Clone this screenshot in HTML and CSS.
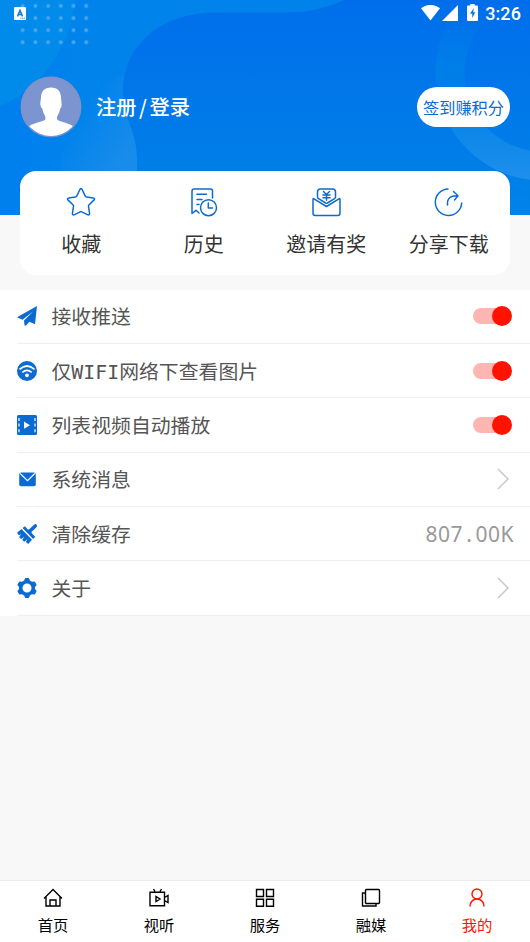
FILE: index.html
```html
<!DOCTYPE html>
<html lang="zh-CN">
<head>
<meta charset="utf-8">
<title>我的</title>
<link rel="stylesheet" href="styles.css">
</head>
<body>
<div class="app">
  <header class="hero">
    <svg class="hero-bg" viewBox="0 0 530 215" aria-hidden="true">
      <defs>
        <linearGradient id="base" x1="0" y1="0" x2="1" y2="0"><stop offset="0" stop-color="#007eee"/><stop offset=".14" stop-color="#0083eb"/><stop offset="1" stop-color="#0082ea"/></linearGradient>
        <linearGradient id="blob" x1="0" y1="0" x2="0" y2="1"><stop offset="0" stop-color="#006eeb"/><stop offset="1" stop-color="#0083e7"/></linearGradient>
        <linearGradient id="glow" gradientUnits="userSpaceOnUse" x1="72" y1="120" x2="130" y2="158"><stop offset="0" stop-color="#198ceb" stop-opacity="0"/><stop offset="1" stop-color="#198ceb"/></linearGradient>
        <linearGradient id="ring" gradientUnits="userSpaceOnUse" x1="0" y1="20" x2="0" y2="180"><stop offset="0" stop-color="#0092e8" stop-opacity="0"/><stop offset=".4" stop-color="#0082e8" stop-opacity=".7"/><stop offset="1" stop-color="#1e90eb"/></linearGradient>
        <pattern id="dots" x="16.4" y="0" width="12.7" height="12.1" patternUnits="userSpaceOnUse"><circle cx="6.3" cy="6" r="2" fill="#49a5ef"/></pattern>
      </defs>
      <rect width="530" height="215" fill="url(#base)"/>
      <path d="M0 0H75C70 45 47 83 0 107Z" fill="#008aea"/>
      <path d="M140 70C90 78 55 120 58 215H150V70Z" fill="url(#glow)"/>
      <path d="M285 12.5H215C164 12.5 123 43 123 92C123 120 137 129 137 160V215H530V0H344C328 8 308 12.5 285 12.5Z" fill="url(#blob)"/>
      <circle cx="543" cy="73" r="93" fill="none" stroke="url(#ring)" stroke-width="29"/>
      <rect x="16.4" y="0" width="76.2" height="48.4" fill="url(#dots)"/>
    </svg>
    <div class="status">
      <svg class="ime" viewBox="0 0 12 13"><rect width="12" height="13" rx="1" fill="#fff"/><path d="M3.5 9.4 6 3.4l2.5 6M4.3 7.6h3.4" fill="none" stroke="#087cdc" stroke-width="1.5"/><path d="M6.5 11.2h4.2" stroke="#087cdc" stroke-dasharray="1 .7"/></svg>
      <div class="signals">
        <svg class="wifi" viewBox="0 0 19 16"><path d="M0 3.2C5.5-1.1 13.5-1.1 19 3.2L9.5 15.5Z" fill="#fff"/></svg>
        <svg class="cell" viewBox="0 0 16 16"><path d="M0 16 16 0V16Z" fill="#fff"/></svg>
        <svg class="battery" viewBox="0 0 11 17"><path d="M3.3 0h4.4v1.6H10q1 0 1 1V16q0 1-1 1H1q-1 0-1-1V2.600q0-1 1-1h2.300Z" fill="#fff"/><path d="M6.700 4 3 9.800h2.200V14L8.400 8.200H6.300Z" fill="#087cdc"/></svg>
        <span class="clock">3:26</span>
      </div>
    </div>
    <div class="profile">
      <svg class="avatar" viewBox="0 0 62 62"><defs><clipPath id="face"><circle cx="31" cy="31" r="29"/></clipPath></defs><circle cx="31" cy="31" r="29.700" fill="#7c94cf" stroke="#7f91c8" stroke-width="1.500"/><g clip-path="url(#face)"><path d="M31 11.500C24.500 11.500 21 15.500 21 21.500L20.300 27Q20 31 22.500 33C23 38 25.500 39 25.500 42.500C25.500 46 15 46 9 50V62H53V50C47 46 37 46 37 42.500C37 39 39.500 38 40 33Q42.300 31 41.500 27L41 21.500C41 15.500 37.500 11.500 31 11.500Z" fill="#fff"/></g></svg>
      <a class="login">注册<span class="slash">/</span>登录</a>
      <button class="checkin">签到赚积分</button>
    </div>
  </header>

  <section class="shortcuts">
    <a class="shortcut"><svg viewBox="0 0 30 30"><path d="M13.900 2.500q1.100-1.800 2.200 0l3.300 6.800q.3.700 1.100.8l7 1q1.700.5.600 1.800L22.900 18q-.5.600-.4 1.300l1.100 7.300q-.1 1.700-1.700 1.200l-6.100-3q-.8-.4-1.600 0l-6.100 3q-1.600.5-1.700-1.200l1.100-7.300q.1-.7-.4-1.300L1.900 12.900q-1.100-1.300.6-1.800l7-1q.8-.1 1.100-.8Z"/></svg><span>收藏</span></a>
    <a class="shortcut"><svg viewBox="0 0 30 30"><path d="M24.500 11V4q0-2-2-2H6Q4 2 4 4v22.500l4-3.200 3 2.700M9 7.200h9.500M9 12.500h5M9 17.500h2M20.300 16v5h4.200"/><circle cx="20.500" cy="20.700" r="8"/></svg><span>历史</span></a>
    <a class="shortcut"><svg viewBox="0 0 30 30"><path d="M6.500 9.500V5q0-3 3-3h12q3 0 3 3v5q0 1-1 1.700L16.400 16q-.9.600-1.800 0l-7-4.300q-1.100-.7-1.100-2.200M3 11.800q-1-.6-1 .7v13.700q0 2.200 2.200 2.200h22.600q2.200 0 2.200-2.200V12.500q0-1.300-1-.7l-12.500 7.700Z"/><path d="m12.500 4.500 3 3 3-3M12 8h7M12 10.700h7M15.500 7.500v5.700"/></svg><span>邀请有奖</span></a>
    <a class="shortcut"><svg viewBox="0 0 30 30"><path d="M15 2A13.200 13.200 0 1 0 28.700 16M14.500 18C14 11.500 17 8.800 24.500 8.800M20.500 4.500 25 8.800l-3.500 4.200"/></svg><span>分享下载</span></a>
  </section>

  <main class="settings">
    <div class="row"><svg class="icon" viewBox="0 0 20 20"><path d="M20 0 18 18.300 12.300 15.700 9 19.500H7.500L7 14.600 16.300 5.300 5.500 13.700 0 11.300Z"/></svg><span class="label">接收推送</span><i class="switch"></i></div>
    <div class="row"><svg class="icon" viewBox="0 0 20 20"><circle cx="10" cy="10" r="10"/><path d="M2.500 8.300Q10 1.700 17.500 8.300M5.300 11.400Q10 7.200 14.700 11.400" fill="none" stroke="#fff" stroke-width="1.700"/><circle cx="10" cy="14.300" r="1.900" fill="#fff"/></svg><span class="label">仅<span class="mono">WIFI</span>网络下查看图片</span><i class="switch"></i></div>
    <div class="row"><svg class="icon" viewBox="0 0 20 20"><rect width="20" height="20" rx="1.500"/><path d="M2 3v15M18 3v15" stroke="#fff" stroke-width="1.200" stroke-dasharray="3 2.600"/><path d="m7 6.500 6 3.700-6 3.500Z" fill="#fff"/></svg><span class="label">列表视频自动播放</span><i class="switch"></i></div>
    <div class="row"><svg class="icon" viewBox="0 0 20 20"><rect x="2.200" y="3.500" width="16.600" height="13.700" rx="2"/><path d="m3.200 4.500 7.300 7.200 7.300-7.200" fill="none" stroke="#fff" stroke-width="1.200"/></svg><span class="label">系统消息</span><svg class="arrow" viewBox="0 0 12 22"><path d="m1 1 10 10L1 21"/></svg></div>
    <div class="row"><svg class="icon" viewBox="0 0 20 20"><path d="M5.500 4 8 2.300 10.500 5.300Q12 6 13 4.500L17 .7q1.500-1.200 2.600 0 1 1.200-.2 2.600L15 7.500q-1.100 1.200.2 2.300l3 2.900L16.200 15Z"/><path d="M4.500 5 15 15.700 11.200 20 8.800 18 10.500 15.200 7.300 17.700 5.200 16 7.200 13 4 15 2.100 13 4.100 10.500 1.500 11 0 8.800Z"/></svg><span class="label">清除缓存</span><span class="size">807<span class="point">.</span>00K</span></div>
    <div class="row"><svg class="icon" viewBox="0 0 20 20"><path fill-rule="evenodd" d="M8.700 0h2.600q.7 0 .9.700l.6 1.800 2.200 1.300 2-.4q.7-.1 1 .5l1.400 2.400q.3.700-.2 1.200L18 9v2l1.200 1.500q.5.500.2 1.200L18 16.100q-.3.600-1 .5l-2-.4-2.200 1.300-.6 1.800q-.2.700-.9.700H8.700q-.7 0-.9-.7l-.6-1.800L5 16.200l-2 .4q-.7.100-1-.5L.6 13.700q-.3-.7.2-1.200L2 11V9L.8 7.500Q.3 7 .6 6.300L2 3.900q.3-.6 1-.5l2 .4 2.200-1.300.6-1.800Q8 0 8.700 0ZM10 5.500a4.500 4.500 0 1 0 0 9 4.500 4.500 0 0 0 0-9Z"/></svg><span class="label">关于</span><svg class="arrow" viewBox="0 0 12 22"><path d="m1 1 10 10L1 21"/></svg></div>
  </main>

  <nav class="tabs">
    <a class="tab"><svg viewBox="0 0 20 20"><path d="M1 10.500 10 1.500l9 9M3 9v9h14V9M7 18v-6h6v6"/></svg><span>首页</span></a>
    <a class="tab"><svg viewBox="0 0 20 20"><path d="M1 4.200h14.500v13.500H1ZM4.500 1 6 3.500M12.500 1 11 3.500M7 8.500v5l4-2.500ZM15.500 9.500 19 7.500v7l-3.500-2"/></svg><span>视听</span></a>
    <a class="tab"><svg viewBox="0 0 20 20"><path d="M1.500 1.500h7v7h-7ZM11.500 1.500h7v7h-7ZM1.500 11.200h7v7h-7ZM11.500 11.200h7v7h-7Z"/></svg><span>服务</span></a>
    <a class="tab"><svg viewBox="0 0 20 20"><rect x="4.500" y="1.500" width="14" height="14" rx="1"/><path d="M4 5H1.500v13H15v-2.500"/></svg><span>融媒</span></a>
    <a class="tab active"><svg viewBox="0 0 20 20"><circle cx="10" cy="6" r="5"/><path d="M3 18.500C3 8.500 17 8.500 17 18.500"/></svg><span>我的</span></a>
  </nav>
</div>
</body>
</html>
```
FILE: styles.css
```css
* { box-sizing: border-box; }

body {
  margin: 0;
  font-family: "Noto Sans CJK SC", sans-serif;
  background: #f8f8f8;
}

.app {
  display: flex;
  flex-direction: column;
  height: 942px;
}

.hero {
  position: relative;
  flex: none;
  height: 215px;
  color: #fff;
}

.hero-bg {
  position: absolute;
  inset: 0;
  width: 100%;
  height: 100%;
}

.status {
  position: relative;
  display: flex;
  justify-content: space-between;
  height: 27px;
  padding: 4px 9px 0 14px;
}

.ime { width: 12px; height: 13px; margin-top: 3px; }
.signals { display: flex; align-items: flex-start; }
.wifi { width: 19px; height: 16px; margin: 1px 2px 0 0; }
.cell { width: 16px; height: 16px; margin: 1px 9px 0 0; }
.battery { width: 11px; height: 17px; margin-right: 7.500px; }

.clock {
  font: 500 18px/20px Roboto, sans-serif;
  letter-spacing: .1px;
}

.profile {
  position: relative;
  display: flex;
  align-items: center;
  height: 62px;
  margin: 49px 20px 0;
}

.avatar { width: 62px; height: 62px; }

.login {
  margin: 0 0 2px 14px;
  font-size: 20.300px;
  font-weight: 500;
  line-height: 30px;
}

.slash { display: inline-block; width: 13px; text-align: center; }

.checkin {
  width: 93px;
  height: 40px;
  margin-left: auto;
  padding: 0;
  border: 0;
  border-radius: 20px;
  background: #fff;
  color: #0b6bd2;
  font: 16.200px/40px "Noto Sans CJK SC", sans-serif;
  white-space: nowrap;
}

.shortcuts {
  position: relative;
  flex: none;
  display: grid;
  grid-template-columns: repeat(4, 1fr);
  height: 103.500px;
  margin: -44px 20px 15px;
  border-radius: 16px;
  background: #fff;
}

.shortcut {
  display: flex;
  flex-direction: column;
  align-items: center;
  padding-top: 16px;
  color: #333;
  font-size: 20px;
  line-height: 30px;
}

.shortcut svg {
  width: 30px;
  height: 30px;
  margin: 0 1px 12px 0;
  fill: none;
  stroke: #0b6bd2;
  stroke-width: 1.500;
  stroke-linecap: round;
  stroke-linejoin: round;
}

.settings { flex: none; background: #fff; }

.row {
  display: flex;
  align-items: center;
  height: 54.400px;
  margin-left: 17px;
  padding-right: 17px;
  border-bottom: 1px solid #efefef;
}

.icon { width: 20px; height: 20px; fill: #0b6bd2; }

.label {
  flex: 1;
  margin-left: 14.500px;
  color: #555;
  font-size: 19.850px;
  line-height: 30px;
}

.mono { font-family: "DejaVu Sans Mono", monospace; line-height: 1; }

.switch {
  position: relative;
  width: 38px;
  height: 16px;
  margin-right: 2px;
  border-radius: 8px;
  background: #ffb5b2;
}

.switch::after {
  content: "";
  position: absolute;
  top: -2px;
  right: -1px;
  width: 20px;
  height: 20px;
  border-radius: 50%;
  background: #ff1200;
}

.arrow {
  width: 12px;
  height: 22px;
  margin-right: 4.500px;
  fill: none;
  stroke: #c8c8c8;
  stroke-width: 1.500;
}

.size {
  color: #999;
  font: 21px/30px "Noto Sans", sans-serif;
  letter-spacing: .5px;
  margin-right: -1px;
}

.point { display: inline-block; width: 12.500px; text-align: center; }

.tabs {
  display: grid;
  grid-template-columns: repeat(5, 1fr);
  height: 62px;
  margin-top: auto;
  border-top: 1px solid #ebebeb;
  background: #fff;
}

.tab {
  display: flex;
  flex-direction: column;
  align-items: center;
  padding-top: 7px;
  color: #000;
  font-size: 15.300px;
  line-height: 24px;
}

.tab svg {
  width: 20px;
  height: 20px;
  margin: 0 1px 4px 0;
  fill: none;
  stroke: currentColor;
  stroke-width: 1.400;
}

.tab.active { color: #ff1200; }
```
